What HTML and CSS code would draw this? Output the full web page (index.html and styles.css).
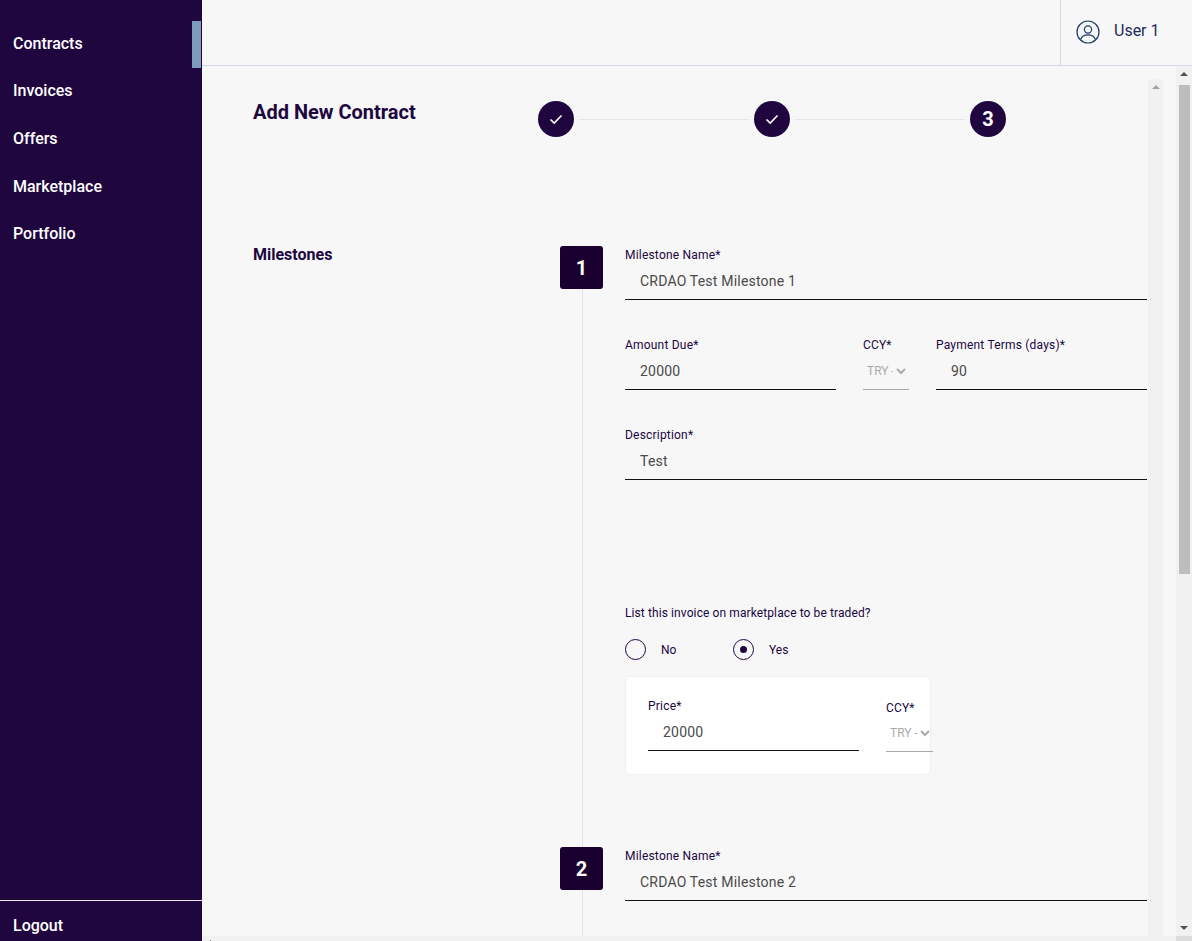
FILE: index.html
```html
<!DOCTYPE html>
<html>
<head>
	<title>Add New Contract</title>
	<link rel="stylesheet" href="styles.css">
</head>
<body>
	<div class="app">
		<aside class="sidebar">
			<nav class="nav">
				<a class="nav-item active">Contracts</a>
				<a class="nav-item">Invoices</a>
				<a class="nav-item">Offers</a>
				<a class="nav-item">Marketplace</a>
				<a class="nav-item">Portfolio</a>
			</nav>
			<a class="logout">Logout</a>
		</aside>

		<div class="main">
			<header class="topbar">
				<div class="user">
					<svg class="user-icon" width="24" height="24" viewBox="0 0 24 24" fill="none" stroke="#1b3a6b" stroke-width="1.2">
						<circle cx="12" cy="12" r="11"/>
						<circle cx="12" cy="9.5" r="3.6"/>
						<path d="M4.6 19.5c1.2-3.2 4-4.6 7.4-4.6s6.200 1.400 7.400 4.600"/>
					</svg>
					<span>User 1</span>
				</div>
			</header>

			<div class="body">
				<div class="panes">
					<div class="pane">
						<div class="content">
							<div class="title-row">
								<h1 class="title">Add New Contract</h1>
								<div class="stepper">
									<div class="step">
										<svg width="14" height="14" viewBox="0 0 14 14" fill="none" stroke="#fff" stroke-width="1.7"><path d="M1.500 7.500l3.700 3.500 7.300-7.500"/></svg>
									</div>
									<div class="step-line"></div>
									<div class="step">
										<svg width="14" height="14" viewBox="0 0 14 14" fill="none" stroke="#fff" stroke-width="1.7"><path d="M1.500 7.500l3.700 3.500 7.300-7.500"/></svg>
									</div>
									<div class="step-line"></div>
									<div class="step">3</div>
								</div>
							</div>

							<div class="milestones">
								<h2 class="section-title">Milestones</h2>
								<div class="milestone-list">
									<div class="milestone">
										<div class="rail">
											<div class="number">1</div>
											<div class="rail-line"></div>
										</div>
										<div class="fields">
											<div class="field">
												<label>Milestone Name*</label>
												<input type="text" value="CRDAO Test Milestone 1">
											</div>
											<div class="field-row">
												<div class="field grow">
													<label>Amount Due*</label>
													<input type="text" value="20000">
												</div>
												<div class="field ccy">
													<label>CCY*</label>
													<select disabled><option>TRY - Turkish Lira</option></select>
												</div>
												<div class="field grow">
													<label>Payment Terms (days)*</label>
													<input type="text" value="90">
												</div>
											</div>
											<div class="field">
												<label>Description*</label>
												<input type="text" value="Test">
											</div>
											<p class="question">List this invoice on marketplace to be traded?</p>
											<div class="radios">
												<div class="radio-item"><span class="radio"></span>No</div>
												<div class="radio-item"><span class="radio checked"></span>Yes</div>
											</div>
											<div class="price-card">
												<div class="field price">
													<label>Price*</label>
													<input type="text" value="20000">
												</div>
												<div class="field ccy card-ccy">
													<label>CCY*</label>
													<select disabled><option>TRY - Turkish Lira</option></select>
												</div>
											</div>
										</div>
									</div>

									<div class="milestone">
										<div class="rail">
											<div class="number">2</div>
											<div class="rail-line"></div>
										</div>
										<div class="fields">
											<div class="field">
												<label>Milestone Name*</label>
												<input type="text" value="CRDAO Test Milestone 2">
											</div>
											<div class="field-row">
												<div class="field grow">
													<label>Amount Due*</label>
													<input type="text" value="15000">
												</div>
												<div class="field ccy">
													<label>CCY*</label>
													<select disabled><option>TRY - Turkish Lira</option></select>
												</div>
												<div class="field grow">
													<label>Payment Terms (days)*</label>
													<input type="text" value="60">
												</div>
											</div>
										</div>
									</div>
								</div>
							</div>
						</div>
						<div class="inner-track"><span class="arrow-up faint"></span></div>
					</div>
					<div class="outer-track">
						<span class="arrow-up"></span>
						<div class="thumb"></div>
						<span class="arrow-down"></span>
					</div>
				</div>
				<div class="hbar"><span class="hbar-tick"></span><span class="hbar-corner"></span></div>
			</div>
		</div>
	</div>
</body>
</html>
```
FILE: styles.css
```css
* {
  box-sizing: border-box;
}

html, body {
  margin: 0;
  height: 100%;
  overflow: hidden;
}

body {
  font-family: Roboto, "Liberation Sans", sans-serif;
  background-color: #f7f7f7;
  color: #20063f;
}

.app {
  display: flex;
  height: 941px;
}

/* sidebar */
.sidebar {
  width: 202px;
  flex-shrink: 0;
  display: flex;
  flex-direction: column;
  justify-content: space-between;
  background-color: #20063f;
  color: #fff;
}

.nav {
  padding-top: 19.500px;
}

.nav-item {
  display: block;
  position: relative;
  height: 47.700px;
  line-height: 47.700px;
  padding-left: 13px;
  font-size: 16px;
  font-weight: 500;
}

.nav-item.active::after {
  content: "";
  position: absolute;
  right: 1px;
  top: 1px;
  width: 9px;
  height: 47px;
  background-color: #7d9cbc;
}

.logout {
  height: 41px;
  line-height: 49px;
  padding-left: 13px;
  border-top: 1px solid #e9e6ee;
  font-size: 16px;
  font-weight: 500;
}

/* top bar */
.main {
  flex: 1;
  min-width: 0;
  display: flex;
  flex-direction: column;
}

.topbar {
  height: 66px;
  flex-shrink: 0;
  display: flex;
  justify-content: flex-end;
  border-bottom: 1px solid #cfd8e3;
}

.user {
  width: 132px;
  display: flex;
  align-items: center;
  padding-left: 15px;
  border-left: 1px solid #cfd8e3;
  color: #1f2a5c;
  font-size: 16px;
}

.user span {
  margin-left: 14px;
  margin-top: -4px;
}

.user-icon {
  margin-top: -1px;
}

/* scroll panes */
.body {
  flex: 1;
  min-height: 0;
  display: flex;
  flex-direction: column;
}

.panes {
  flex: 1;
  min-height: 0;
  display: flex;
}

.pane {
  flex: 1;
  min-width: 0;
  display: flex;
  padding: 13px 13px 0 0;
}

.content {
  flex: 1;
  min-width: 0;
  overflow: hidden;
  padding: 22px 1px 0 51px;
}

.inner-track {
  width: 15px;
  flex-shrink: 0;
  display: flex;
  flex-direction: column;
  align-items: center;
  padding-top: 6px;
  background-color: #f1f1f1;
}

.outer-track {
  width: 16px;
  flex-shrink: 0;
  display: flex;
  flex-direction: column;
  align-items: center;
  padding: 6px 0 6px;
  background-color: #f1f1f1;
}

.arrow-up {
  width: 0;
  height: 0;
  border-left: 4px solid transparent;
  border-right: 4px solid transparent;
  border-bottom: 4px solid #505050;
}

.arrow-up.faint {
  border-bottom-color: #a3a3a3;
}

.arrow-down {
  width: 0;
  height: 0;
  margin-top: auto;
  border-left: 4px solid transparent;
  border-right: 4px solid transparent;
  border-top: 4px solid #505050;
}

.thumb {
  width: 11px;
  height: 489px;
  margin-top: 9px;
  background-color: #bdbdbd;
}

.hbar {
  height: 5px;
  flex-shrink: 0;
  position: relative;
  background-color: #f1f1f1;
}

.hbar-tick {
  position: absolute;
  left: 8px;
  bottom: 0;
  width: 1px;
  height: 1px;
  background-color: #707070;
}

.hbar-corner {
  position: absolute;
  right: 0;
  top: 0;
  width: 16px;
  height: 5px;
  background-color: #dcdcdc;
}

/* heading and stepper */
.title-row {
  display: flex;
  height: 36px;
}

.title {
  width: 285px;
  margin: 0;
  font-size: 20px;
  line-height: 23px;
  font-weight: 700;
}

.stepper {
  width: 468px;
  display: flex;
  align-items: center;
}

.step {
  width: 36px;
  height: 36px;
  flex-shrink: 0;
  display: flex;
  align-items: center;
  justify-content: center;
  border-radius: 50%;
  background-color: #20063f;
  color: #fff;
  font-size: 20px;
  font-weight: 700;
}

.step-line {
  flex: 1;
  height: 1px;
  margin: 0 5px;
  background-color: #e5e5e5;
}

/* milestones */
.milestones {
  display: flex;
  margin-top: 109px;
}

.section-title {
  width: 307px;
  flex-shrink: 0;
  margin: 0;
  font-size: 16px;
  line-height: 19px;
  font-weight: 700;
  position: relative;
  top: -1px;
}

.milestone-list {
  flex: 1;
  min-width: 0;
}

.milestone {
  display: flex;
}

.rail {
  width: 65px;
  flex-shrink: 0;
  display: flex;
  flex-direction: column;
}

.number {
  width: 43px;
  height: 43px;
  display: flex;
  align-items: center;
  justify-content: center;
  border-radius: 3px;
  background-color: #1a002e;
  color: #fff;
  font-size: 20px;
  font-weight: 700;
}

.rail-line {
  flex: 1;
  width: 1px;
  margin-left: 22px;
  background-color: #e3e3e3;
}

.fields {
  flex: 1;
  min-width: 0;
  padding-bottom: 72px;
}

.field {
  display: flex;
  flex-direction: column;
  height: 90px;
  padding-top: 2px;
}

.field label {
  height: 14px;
  font-size: 12px;
  line-height: 14px;
  letter-spacing: 0.200px;
}

.field input {
  height: 38px;
  width: 100%;
  padding: 0 0 0 15px;
  border: none;
  border-bottom: 1px solid #111;
  border-radius: 0;
  background: transparent;
  outline: none;
  color: #4a4a4a;
  font-family: inherit;
  font-size: 14px;
  letter-spacing: 0.200px;
}

.field select {
  height: 38px;
  width: 100%;
  padding: 0;
  border: none;
  border-bottom: 1px solid #a8a8a8;
  border-radius: 0;
  background: transparent;
  color: #aaa;
  opacity: 1;
  font-family: inherit;
  font-size: 12px;
}

.field-row {
  display: flex;
  gap: 27px;
}

.grow {
  flex: 1;
  min-width: 0;
}

.ccy {
  width: 46px;
  flex-shrink: 0;
}

.question {
  margin: 0;
  padding-top: 90px;
  font-size: 12px;
  line-height: 14px;
  letter-spacing: 0.100px;
}

.radios {
  display: flex;
  margin-top: 19px;
}

.radio-item {
  width: 108px;
  display: flex;
  align-items: center;
  gap: 15px;
  height: 21px;
  font-size: 12px;
}

.radio {
  width: 21px;
  height: 21px;
  display: flex;
  align-items: center;
  justify-content: center;
  border: 1px solid #20063f;
  border-radius: 50%;
}

.radio.checked::after {
  content: "";
  width: 7px;
  height: 7px;
  border-radius: 50%;
  background-color: #20063f;
}

.price-card {
  width: 306px;
  height: 99px;
  display: flex;
  gap: 27px;
  margin-top: 16px;
  padding: 20px 0 0 22px;
  border: 1px solid #efefef;
  border-radius: 4px;
  background-color: #fff;
}

.price {
  width: 211px;
  flex-shrink: 0;
}

.card-ccy {
  width: 47px;
  padding-top: 4px;
}

.card-ccy select {
  height: 37px;
}
```
